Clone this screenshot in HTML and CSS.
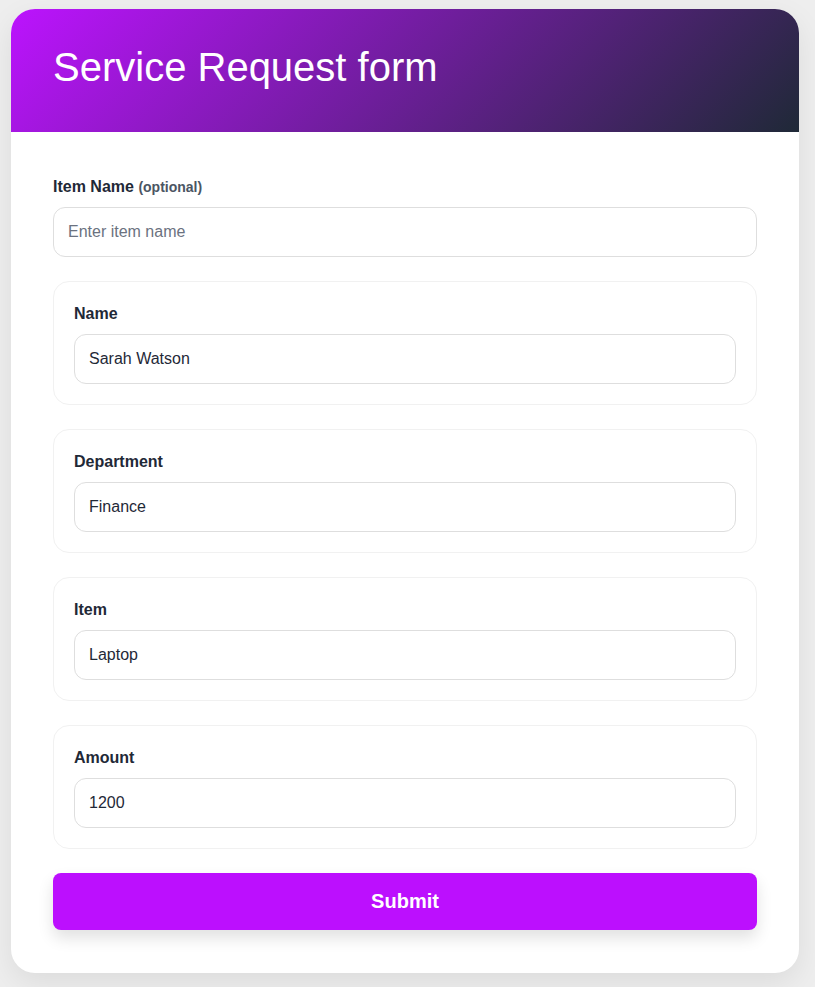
FILE: index.html
```html
<!DOCTYPE html>
<html lang="en">
<head>
    <meta charset="UTF-8">
    <meta name="viewport" content="width=device-width, initial-scale=1.0">
    <title>Service Request form</title>
    <link rel="stylesheet" href="styles.css">
</head>
<body>

    <div class="form-card">
        <div class="form-header">
            <h1>Service Request form</h1>
        </div>

        <form class="form-body" onsubmit="return false;">
            <div class="field">
                <label for="item-name">Item Name <span class="hint">(optional)</span></label>
                <input id="item-name" type="text" placeholder="Enter item name">
            </div>

            <!-- Request details -->
            <div class="field-box">
                <label for="name">Name</label>
                <input id="name" type="text" value="Sarah Watson">
            </div>

            <div class="field-box">
                <label for="department">Department</label>
                <input id="department" type="text" value="Finance">
            </div>

            <div class="field-box">
                <label for="item">Item</label>
                <input id="item" type="text" value="Laptop">
            </div>

            <div class="field-box">
                <label for="amount">Amount</label>
                <input id="amount" type="text" value="1200">
            </div>

            <button type="submit" class="submit-btn">Submit</button>
        </form>
    </div>

</body>
</html>
```

FILE: styles.css
```css
body {
    margin: 0;
    padding: 9px 16px 14px 11px;
    background-color: #eeeeee;
    font-family: "Liberation Sans", Arial, sans-serif;
    color: #1f2937;
}
.form-card {
    width: 788px;
    background-color: #ffffff;
    border-radius: 24px;
    overflow: hidden;
    box-shadow: 0 10px 30px rgba(0, 0, 0, 0.08);
}
.form-header {
    height: 123px;
    box-sizing: border-box;
    padding: 34px 42px 0;
    background: linear-gradient(135deg, #bc13fe 0%, #1f2937 100%);
}
.form-header h1 {
    margin: 0;
    font-size: 40px;
    line-height: 48px;
    font-weight: normal;
    color: #ffffff;
}
.form-body {
    display: flex;
    flex-direction: column;
    gap: 24px;
    padding: 43px 42px 43px;
}
.field, .field-box {
    display: flex;
    flex-direction: column;
    gap: 8px;
}
.field-box {
    padding: 20px;
    border: 1px solid #f1f1f1;
    border-radius: 16px;
}
label {
    height: 24px;
    font-size: 16px;
    line-height: 24px;
    font-weight: bold;
    color: #1f2937;
}
.hint {
    font-size: 14px;
    color: #4b5563;
}
input {
    height: 50px;
    box-sizing: border-box;
    padding: 0 14px;
    border: 1px solid #dedede;
    border-radius: 12px;
    font-family: inherit;
    font-size: 16px;
    color: #1f2937;
    background-color: #ffffff;
    outline: none;
}
input::placeholder {
    color: #6b7280;
}
.submit-btn {
    height: 57px;
    border: none;
    border-radius: 8px;
    background-color: #bc0ffe;
    color: #ffffff;
    font-family: inherit;
    font-size: 20px;
    font-weight: bold;
    cursor: pointer;
    box-shadow: 0 8px 16px rgba(0, 0, 0, 0.12);
}
```
